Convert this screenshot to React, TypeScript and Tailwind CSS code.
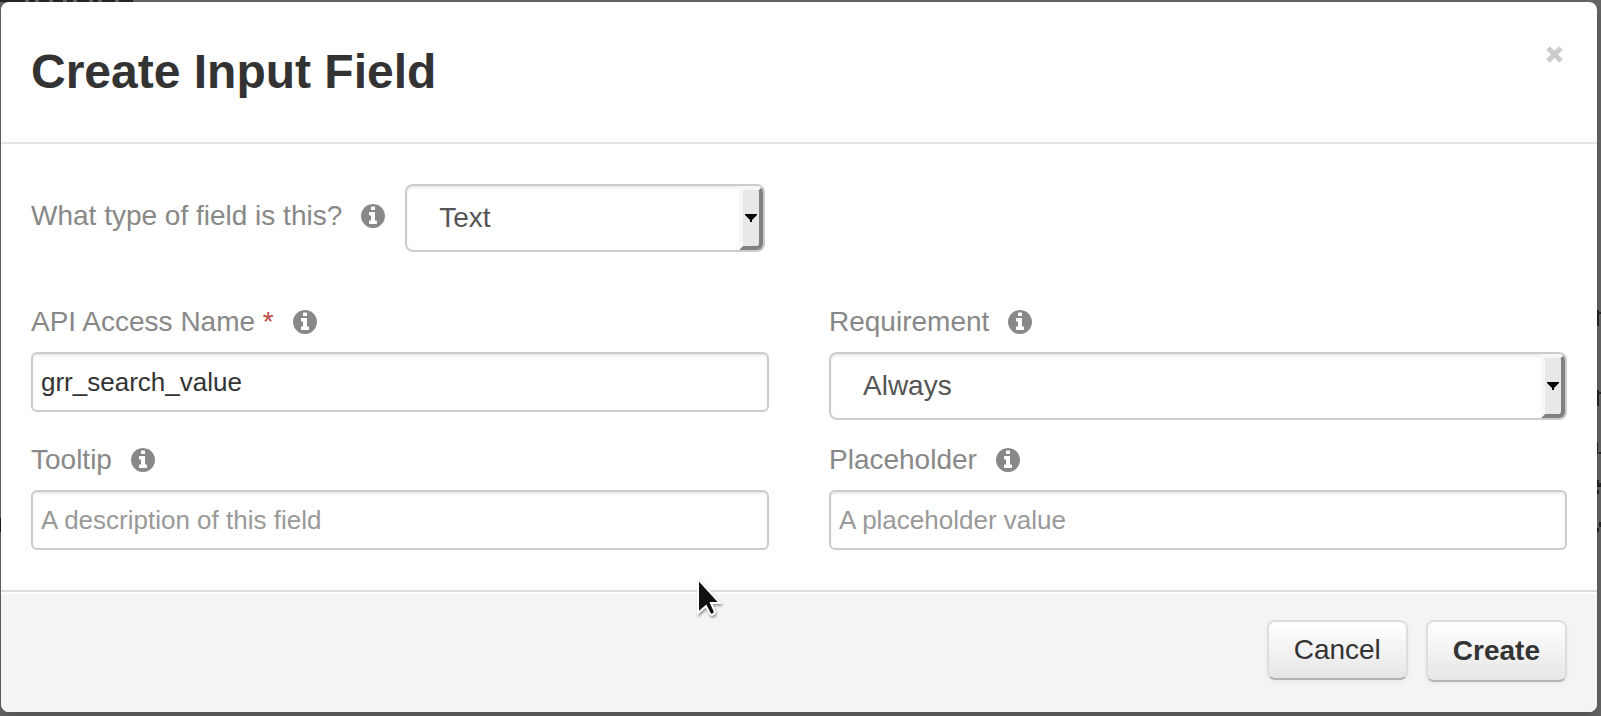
import React from "react";

function InfoIcon() {
  return (
    <svg viewBox="0 0 1536 1536" className="h-6 w-6 shrink-0 fill-[#888888]" aria-hidden="true">
      <path d="M1024 1248v-160q0-14-9-23t-23-9h-96v-512q0-14-9-23t-23-9h-320q-14 0-23 9t-9 23v160q0 14 9 23t23 9h96v320h-96q-14 0-23 9t-9 23v160q0 14 9 23t23 9h448q14 0 23-9t9-23zM896 352v-160q0-14-9-23t-23-9h-192q-14 0-23 9t-9 23v160q0 14 9 23t23 9h192q14 0 23-9t9-23zM1536 768q0 209-103 385.5t-279.5 279.5-385.5 103-385.5-103-279.5-279.5-103-385.5 103-385.5 279.5-279.5 385.5-103 385.5 103 279.5 279.5 103 385.5z" />
    </svg>
  );
}

function FieldLabel({ htmlFor, text, required = false }: { htmlFor: string; text: string; required?: boolean }) {
  return (
    <div className="flex h-10 items-center gap-[19px]">
      <label htmlFor={htmlFor} className="text-[28px] leading-10 text-[#888888]">
        {text}
        {required && <span className="text-[#b94a48]"> *</span>}
      </label>
      <InfoIcon />
    </div>
  );
}

function Select({ id, options }: { id: string; options: string[] }) {
  return (
    <div className="relative">
      <select
        id={id}
        className="block h-[68px] w-full appearance-none rounded-lg border-2 border-[#cccccc] bg-white pr-8 pl-8 text-[28px] text-[#555555] shadow-[inset_0_2px_2px_rgba(0,0,0,0.075)]"
      >
        {options.map((option) => (
          <option key={option}>{option}</option>
        ))}
      </select>
      <span className="pointer-events-none absolute inset-y-0.5 right-0.5 flex w-6 items-center justify-center rounded-r-md border-4 border-t-[#f7f7f6] border-r-[#808080] border-b-[#808080] border-l-[#f7f7f6] bg-[#e8e8e6]">
        <svg viewBox="0 0 12 8" className="h-2 w-3 shrink-0" aria-hidden="true">
          <path d="M0 0h12v1L7 6v2H5V6L0 1z" />
        </svg>
      </span>
    </div>
  );
}

function TextInput({ id, value, placeholder }: { id: string; value?: string; placeholder?: string }) {
  return (
    <input
      id={id}
      type="text"
      defaultValue={value}
      placeholder={placeholder}
      className="block h-[60px] w-full rounded-md border-2 border-[#cccccc] bg-white px-2 text-[26px] text-[#333333] shadow-[inset_0_2px_2px_rgba(0,0,0,0.075)] placeholder:text-[#999999]"
    />
  );
}

function Pointer() {
  return (
    <svg
      viewBox="0 0 30 44"
      className="pointer-events-none absolute top-[575px] left-[695px] h-11 w-[30px] drop-shadow-[1px_2px_1px_rgba(0,0,0,0.35)]"
      aria-hidden="true"
    >
      <path d="M3 4v34l8-7 4 8q3 2 5-2l-4-9h9z" fill="#111111" stroke="#ffffff" strokeWidth="2" />
    </svg>
  );
}

/* Slivers of the dimmed page that stay visible around the dialog. */
function PageSlivers() {
  return (
    <div aria-hidden="true" className="pointer-events-none">
      <svg viewBox="0 0 140 2" className="absolute top-0 left-0 h-0.5 w-[140px]">
        <path
          d="M0 0h25v2H0zM29 0h6v2h-6zM39 0h10v2H39zM53 0h10v2H53zM67 0h6v2h-6zM77 0h12v2H77zM93 0h5v2h-5zM102 0h13v2h-13zM119 0h14v2h-14z"
          fill="#242424"
        />
      </svg>
      <svg viewBox="0 0 4 240" className="absolute top-[300px] right-0 h-[240px] w-1">
        <path
          d="M0 10h2v16H0zM2 12h2v2H2zM0 90h2v16H0zM2 92h2v2H2zM0 142h1v12H0zM2 152h2v2H2zM0 180h2v3h2v4H0zM0 190h2v4H0zM2 222h2v5H2zM0 228h2v4H0z"
          fill="#222222"
        />
      </svg>
      <svg viewBox="0 0 1 14" className="absolute top-[518px] left-0 h-3.5 w-px">
        <path d="M0 0h1v14H0z" fill="#1a1a1a" />
      </svg>
    </div>
  );
}

const buttonStyle =
  "rounded-lg border-2 border-[#dddddd] border-b-[#b3b3b3] bg-linear-to-b from-white to-[#e6e6e6] px-[25px] text-[28px] leading-10 text-[#333333] shadow-[0_2px_4px_rgba(0,0,0,0.05)]";

export default function App() {
  return (
    <div className="relative min-h-screen bg-[#666666] pt-0.5 pr-1 pb-1 pl-px font-['Liberation_Sans',Arial,sans-serif]">
      <div
        role="dialog"
        aria-labelledby="dialog-title"
        className="overflow-hidden rounded-lg bg-white shadow-[0_6px_14px_rgba(0,0,0,0.2)]"
      >
        <header className="flex items-start justify-between border-b-2 border-[#e5e5e5] px-[30px] py-10">
          <h2 id="dialog-title" className="text-[48px] leading-[60px] font-bold text-[#333333]">
            Create Input Field
          </h2>
          <button type="button" aria-label="Close" className="p-0.5">
            <svg viewBox="0 0 20 20" className="h-5 w-5" aria-hidden="true">
              <path d="M3 4l13 13M16 4L3 17" stroke="#cccccc" strokeWidth="5" />
            </svg>
          </button>
        </header>
        <form id="field-form" className="px-[30px] pt-10 pb-10">
          <div className="flex items-start">
            <div className="pt-3">
              <FieldLabel htmlFor="type" text="What type of field is this?" />
            </div>
            <div className="ml-5 w-[360px]">
              <Select id="type" options={["Text", "Number", "Select"]} />
            </div>
          </div>
          <div className="mt-[50px] grid grid-cols-2 gap-x-[60px] gap-y-5">
            <div className="flex flex-col gap-2.5">
              <FieldLabel htmlFor="api-name" text="API Access Name" required />
              <TextInput id="api-name" value="grr_search_value" />
            </div>
            <div className="flex flex-col gap-2.5">
              <FieldLabel htmlFor="requirement" text="Requirement" />
              <Select id="requirement" options={["Always", "Optional"]} />
            </div>
            <div className="flex flex-col gap-2.5">
              <FieldLabel htmlFor="tooltip" text="Tooltip" />
              <TextInput id="tooltip" placeholder="A description of this field" />
            </div>
            <div className="flex flex-col gap-2.5">
              <FieldLabel htmlFor="placeholder" text="Placeholder" />
              <TextInput id="placeholder" placeholder="A placeholder value" />
            </div>
          </div>
        </form>
        <footer className="flex items-start justify-end gap-[18px] border-t-2 border-[#dddddd] bg-[#f4f4f4] px-[30px] pt-7 pb-[30px] shadow-[inset_0_2px_0_#ffffff]">
          <button type="button" className={`${buttonStyle} h-[60px]`}>
            Cancel
          </button>
          <button type="submit" form="field-form" className={`${buttonStyle} h-[62px] font-bold`}>
            Create
          </button>
        </footer>
      </div>
      <PageSlivers />
      <Pointer />
    </div>
  );
}
